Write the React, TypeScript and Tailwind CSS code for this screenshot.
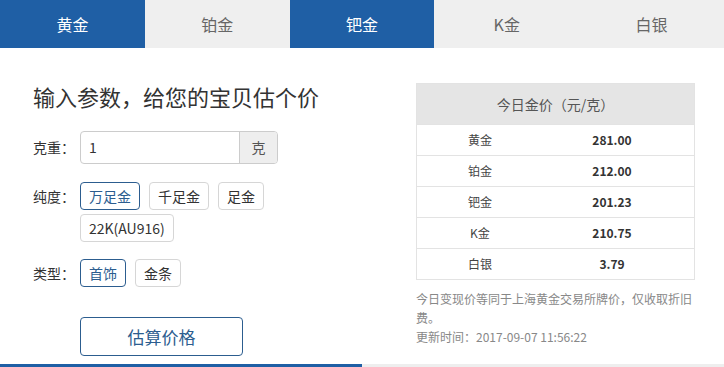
import React from "react";

const TABS = [
  { name: "黄金", active: true },
  { name: "铂金", active: false },
  { name: "钯金", active: true },
  { name: "K金", active: false },
  { name: "白银", active: false },
];

const PRICES = [
  { name: "黄金", price: "281.00" },
  { name: "铂金", price: "212.00" },
  { name: "钯金", price: "201.23" },
  { name: "K金", price: "210.75" },
  { name: "白银", price: "3.79" },
];

function Chip({ label, active }: { label: string; active?: boolean }) {
  return (
    <button
      className={`h-[28px] px-[8px] rounded-[4px] border text-[14px] leading-none bg-white ${
        active ? "border-[#2c5d8f] text-[#2c5d8f]" : "border-[#d6d6d6] text-[#333]"
      }`}
    >
      {label}
    </button>
  );
}

export default function App() {
  return (
    <div
      className="w-[724px] h-[367px] flex flex-col bg-white overflow-hidden"
      style={{ fontFamily: '"Noto Sans CJK SC", "Noto Sans", sans-serif' }}
    >
      {/* Tabs */}
      <div className="grid grid-cols-5 h-[48px]">
        {TABS.map((t) => (
          <div
            key={t.name}
            className={`flex items-center justify-center text-[16px] ${
              t.active ? "bg-[#1f5fa5] text-white" : "bg-[#efefef] text-[#666]"
            }`}
          >
            {t.name}
          </div>
        ))}
      </div>

      <div className="flex-1 flex">
        {/* Left form */}
        <div className="w-[416px] pl-[33px] pt-[33px]">
          <h1 className="text-[22px] leading-[30px] text-[#333]">输入参数，给您的宝贝估个价</h1>

          <div className="flex items-center mt-[20px]">
            <span className="w-[47px] text-[14px] text-[#333]">克重：</span>
            <div className="flex h-[33px] w-[198px] rounded-[4px] border border-[#ccc] overflow-hidden">
              <input
                defaultValue="1"
                className="flex-1 min-w-0 px-[8px] text-[14px] text-[#333] outline-none"
              />
              <div className="w-[38px] flex items-center justify-center bg-[#eee] border-l border-[#ccc] text-[14px] text-[#555]">
                克
              </div>
            </div>
          </div>

          <div className="flex mt-[18px]">
            <span className="w-[47px] text-[14px] leading-[28px] text-[#333]">纯度：</span>
            <div className="flex flex-col gap-[4px]">
              <div className="flex gap-[9px]">
                <Chip label="万足金" active />
                <Chip label="千足金" />
                <Chip label="足金" />
              </div>
              <div className="flex">
                <Chip label="22K(AU916)" />
              </div>
            </div>
          </div>

          <div className="flex mt-[17px]">
            <span className="w-[47px] text-[14px] leading-[28px] text-[#333]">类型：</span>
            <div className="flex gap-[9px]">
              <Chip label="首饰" active />
              <Chip label="金条" />
            </div>
          </div>

          <button className="mt-[30px] ml-[47px] w-[163px] h-[39px] rounded-[4px] border border-[#2c5d8f] text-[17px] text-[#2c5d8f] bg-white">
            估算价格
          </button>
        </div>

        {/* Right price table */}
        <div className="w-[279px] pt-[35px]">
          <div className="border border-[#e3e3e3]">
            <div className="h-[40px] flex items-center justify-center bg-[#e5e5e5] text-[14px] text-[#555]">
              今日金价（元/克）
            </div>
            {PRICES.map((p) => (
              <div
                key={p.name}
                className="grid grid-cols-[126px_138px] h-[31px] items-center border-t border-[#e3e3e3] text-[12px]"
              >
                <span className="text-center text-[#444]">{p.name}</span>
                <span className="text-center font-bold text-[#333]">{p.price}</span>
              </div>
            ))}
          </div>
          <p className="mt-[9px] text-[12px] leading-[19px] text-[#888]">
            今日变现价等同于上海黄金交易所牌价，仅收取折旧费。
            <br />
            更新时间：2017-09-07 11:56:22
          </p>
        </div>
      </div>

      {/* Bottom tab edge */}
      <div className="grid grid-cols-2 h-[3px]">
        <div className="bg-[#1f5fa5]" />
        <div className="bg-[#eeeeee]" />
      </div>
    </div>
  );
}
